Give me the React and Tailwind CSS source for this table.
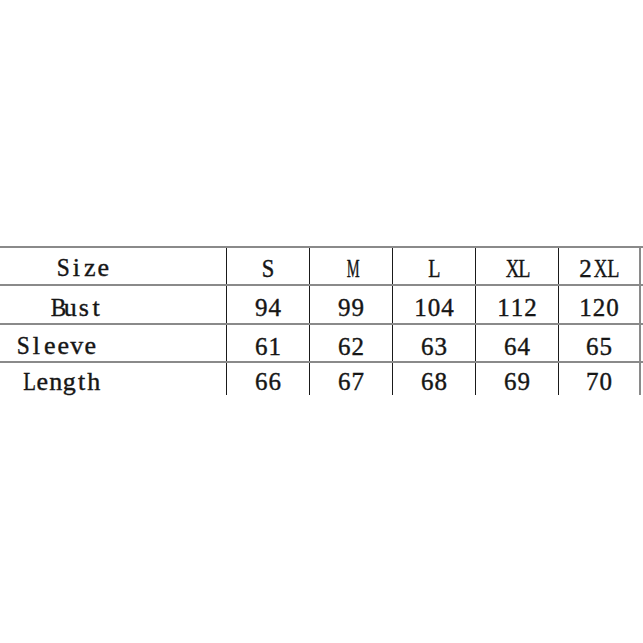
const SCALE = {
  M: "scale-x-[0.58]",
  X: "scale-x-[0.75]",
  L: "scale-x-[0.8]",
  S: "scale-x-[0.9]",
  B: "scale-x-[0.9]",
};

const WIDTH = {
  t: "w-[11px]",
};

function Word({ text, size = "" }) {
  return (
    <span className={`inline-flex ${size}`}>
      {text.split("").map((c, i) => (
        <span key={i} className={`inline-block ${WIDTH[c] || "w-[13.5px]"} text-center ${SCALE[c] || ""}`}>
          {c}
        </span>
      ))}
    </span>
  );
}

export default function App() {
  const rows = [
    { label: "Size", pl: "pl-[56px]", vals: ["S", "M", "L", "XL", "2XL"], h: "h-[38px]", pt: "pt-[4px]" },
    { label: "Bust", pl: "pl-[50px]", vals: ["94", "99", "104", "112", "120"], h: "h-[39px]", pt: "pt-[6px]" },
    { label: "Sleeve", pl: "pl-[16px]", vals: ["61", "62", "63", "64", "65"], h: "h-[38px]", pt: "pt-[6px]" },
    { label: "Length", pl: "pl-[22px]", vals: ["66", "67", "68", "69", "70"], h: "h-[34px]", pt: "pt-[5px]" },
  ];
  return (
    <div className="w-[643px] h-[643px] bg-white pt-[246px] overflow-hidden text-[#161616] text-[25px] [font-family:'Liberation_Serif',serif] [-webkit-text-stroke:0.4px_#161616]">
      {rows.map((r, i) => (
        <div key={i} className={`flex w-[643px] border-t-2 border-[#8a8a8a] ${r.h}`}>
          <div className={`w-[226px] flex items-center ${r.pl} ${r.pt} leading-none`}>
            <Word text={r.label} size="text-[26px]" />
          </div>
          {r.vals.map((v, j) => (
            <div
              key={j}
              className={`w-[83px] border-l border-[#1a1a1a] flex items-center justify-center ${r.pt} leading-none ${j === 4 ? "border-r-2 border-r-[#8a8a8a]" : ""}`}
            >
              <Word text={v} />
            </div>
          ))}
        </div>
      ))}
    </div>
  );
}
